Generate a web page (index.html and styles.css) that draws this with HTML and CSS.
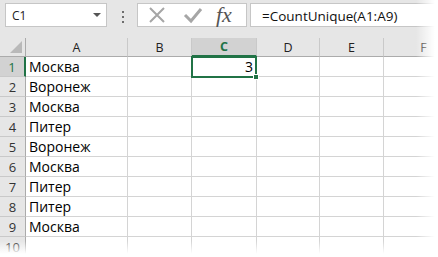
FILE: index.html
```html
<!DOCTYPE html>
<html lang="en">
<head>
    <meta charset="UTF-8">
    <title>CountUnique</title>
    <link rel="stylesheet" href="styles.css">
</head>
<body>
    <div id="sheet">
        <div id="formula-bar">
            <div class="name-box">
                <span>C1</span>
                <span class="drop"></span>
            </div>
            <div class="grip"><i></i><i></i><i></i></div>
            <div class="buttons">
                <svg width="20" height="20" viewBox="0 0 20 20"><path d="M3 3 L17 17 M17 3 L3 17" stroke="#a6a6a6" stroke-width="2" fill="none"/></svg>
                <svg width="20" height="20" viewBox="0 0 20 20"><path d="M2 10 L8 16 L18 4" stroke="#a6a6a6" stroke-width="3" fill="none"/></svg>
                <span class="fx">fx</span>
            </div>
            <div class="formula">=CountUnique(A1:A9)</div>
        </div>

        <div id="grid">
            <div class="hd corner"><span class="tri"></span></div>
            <div class="hd">A</div>
            <div class="hd">B</div>
            <div class="hd active">C</div>
            <div class="hd">D</div>
            <div class="hd">E</div>
            <div class="hd">F</div>
        </div>

        <div class="selection"><span class="handle"></span></div>
        <div class="fade-right"></div>
        <div class="fade-bottom"></div>
    </div>

    <script>
        // строки листа
        const values = ['Москва', 'Воронеж', 'Москва', 'Питер', 'Воронеж', 'Москва', 'Питер', 'Питер', 'Москва', ''];
        const grid = document.getElementById('grid');

        values.forEach((v, i) => {
            const num = document.createElement('div');
            num.className = 'rn' + (i === 0 ? ' active' : '');
            num.textContent = i + 1;
            grid.appendChild(num);

            const a = document.createElement('div');
            a.className = 'cell';
            a.textContent = v;
            grid.appendChild(a);

            for (let c = 0; c < 5; c++) {
                const cell = document.createElement('div');
                cell.className = 'cell';
                if (i === 0 && c === 1) {
                    cell.className = 'cell num';
                    cell.textContent = '3';
                }
                grid.appendChild(cell);
            }
        });
    </script>
</body>
</html>
```

FILE: styles.css
```css
* {
    box-sizing: border-box;
}
body {
    margin: 0;
    background-color: #ffffff;
    font-family: 'Liberation Sans', Arial, sans-serif;
}
#sheet {
    position: relative;
    width: 438px;
    height: 257px;
    overflow: hidden;
}
#formula-bar {
    display: flex;
    align-items: flex-start;
    height: 38px;
    padding: 3px 0 0 5px;
    background-color: #e6e6e6;
}
.name-box {
    display: flex;
    align-items: center;
    justify-content: space-between;
    width: 102px;
    height: 24px;
    padding: 0 5px 0 6px;
    background-color: #ffffff;
    border: 1px solid #c6c6c6;
    font-family: 'Open Sans', sans-serif;
    font-size: 12px;
    color: #222222;
}
.drop {
    width: 0;
    height: 0;
    border-left: 4px solid transparent;
    border-right: 4px solid transparent;
    border-top: 4px solid #555555;
}
.grip {
    display: flex;
    flex-direction: column;
    gap: 3px;
    width: 30px;
    padding: 8px 0 0 15px;
}
.grip i {
    display: block;
    width: 2px;
    height: 2px;
    background-color: #6d6d6d;
}
.buttons {
    display: flex;
    align-items: center;
    gap: 16px;
    width: 110px;
    height: 24px;
    padding-left: 9px;
    background-color: #ffffff;
    border: 1px solid #c6c6c6;
}
.fx {
    font-family: 'Liberation Serif', serif;
    font-style: italic;
    font-size: 22px;
    line-height: 22px;
    color: #555555;
    margin-left: -3px;
}
.formula {
    flex: 1;
    height: 24px;
    margin-left: 3px;
    padding: 3px 0 0 11px;
    background-color: #ffffff;
    border: 1px solid #c6c6c6;
    border-right: none;
    font-family: 'Open Sans', sans-serif;
    font-size: 13.5px;
    color: #111111;
}
#grid {
    display: grid;
    grid-template-columns: 26px 102px 64px 65px 63px 64px 80px;
    grid-template-rows: 19px repeat(10, 20px);
}
.hd {
    display: flex;
    align-items: center;
    justify-content: center;
    background-color: #e6e6e6;
    border-right: 1px solid #c9c9c9;
    border-bottom: 1px solid #ababab;
    font-family: 'Open Sans', sans-serif;
    font-size: 12.5px;
    color: #222222;
}
.hd.active {
    background-color: #d2d2d2;
    color: #217346;
    font-weight: bold;
    border-bottom: 2px solid #217346;
}
.corner {
    position: relative;
    border-right: 1px solid #ababab;
}
.tri {
    position: absolute;
    right: 3px;
    bottom: 3px;
    width: 0;
    height: 0;
    border-left: 12px solid transparent;
    border-bottom: 12px solid #b9b9b9;
}
.rn {
    display: flex;
    align-items: center;
    justify-content: center;
    background-color: #e6e6e6;
    border-right: 1px solid #ababab;
    border-bottom: 1px solid #c9c9c9;
    font-family: 'Open Sans', sans-serif;
    font-size: 13px;
    color: #333333;
}
.rn.active {
    background-color: #d2d2d2;
    color: #217346;
    border-right: 2px solid #217346;
}
.cell {
    display: flex;
    align-items: center;
    padding: 0 3px;
    border-right: 1px solid #d4d4d4;
    border-bottom: 1px solid #d4d4d4;
    font-family: 'Open Sans', sans-serif;
    font-size: 14px;
    color: #000000;
    white-space: nowrap;
}
.cell.num {
    justify-content: flex-end;
}
.selection {
    position: absolute;
    left: 191px;
    top: 56px;
    width: 66px;
    height: 22px;
    border: 2px solid #217346;
}
.handle {
    position: absolute;
    right: -4px;
    bottom: -4px;
    width: 6px;
    height: 6px;
    background-color: #217346;
    border: 1px solid #ffffff;
}
.fade-right {
    position: absolute;
    top: 0;
    right: 0;
    width: 22px;
    height: 100%;
    background: linear-gradient(to right, rgba(255,255,255,0), #ffffff 85%);
}
.fade-bottom {
    position: absolute;
    left: 0;
    bottom: 0;
    width: 100%;
    height: 16px;
    background: linear-gradient(to bottom, rgba(255,255,255,0), #ffffff 80%);
}
```
